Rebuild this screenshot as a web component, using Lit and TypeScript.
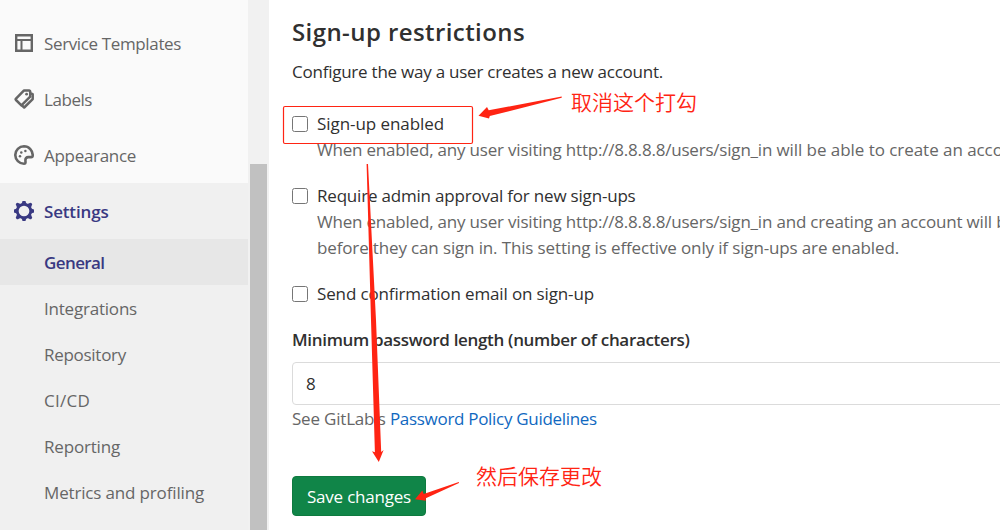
import { LitElement, html, css, svg, TemplateResult } from "lit";
import { customElement, property } from "lit/decorators.js";
import { classMap } from "lit/directives/class-map.js";
import { styleMap } from "lit/directives/style-map.js";

interface NavItem {
  label: string;
  tracking: number;
  icon?: TemplateResult;
  active?: boolean;
}

const track = (px: number) => styleMap({ letterSpacing: `${px}px` });

const templateIcon = svg`
  <path fill="none" stroke="currentColor" stroke-width="2.4" d="M2.2 2.2h15.6v15.6H2.2z"/>
  <path fill="none" stroke="currentColor" stroke-width="2" d="M2 7h16M7.500 7v11"/>`;

const labelsIcon = svg`
  <path fill="none" stroke="currentColor" stroke-width="2.500" stroke-linejoin="round"
    d="M9.800 1.600h5.400a1 1 0 0 1 1 1v5L7.400 16.300 2 11a1 1 0 0 1 0-1.400z"/>
  <path fill="none" stroke="currentColor" stroke-width="2.500" stroke-linejoin="round"
    d="M16.800 4.500l1.900.7v4.900L10.200 18.500 7.200 15.800"/>
  <circle cx="12.600" cy="5.200" r="1.400" fill="currentColor"/>`;

const appearanceIcon = svg`
  <path fill="none" stroke="currentColor" stroke-width="2.600" stroke-linejoin="round"
    d="M10 1.300a8.700 8.700 0 1 0 0 17.400c1.100 0 1.600-.5 1.500-1.700l-.1-2c0-1.900 1-2.900 2.800-2.900h2.900c1.100 0 1.600-.6 1.600-1.600A8.800 8.800 0 0 0 10 1.300z"/>
  <circle cx="11.400" cy="6" r="1.250" fill="currentColor"/>
  <circle cx="7.300" cy="7.400" r="1.250" fill="currentColor"/>
  <circle cx="6" cy="11.300" r="1.250" fill="currentColor"/>`;

const gearIcon = svg`
  <circle cx="10" cy="10" r="6.700" fill="none" stroke="currentColor" stroke-width="2.700"/>
  ${[0, 45, 90, 135, 180, 225, 270, 315].map(
    (a) => svg`<path fill="currentColor" transform="rotate(${a} 10 10)"
      d="M6.900 3.800l1.400-2.900a1.600 1.600 0 0 1 3.400 0l1.400 2.900z"/>`
  )}`;

const sections: NavItem[] = [
  { label: "Service Templates", tracking: -0.365, icon: templateIcon },
  { label: "Labels", tracking: -0.443, icon: labelsIcon },
  { label: "Appearance", tracking: -0.305, icon: appearanceIcon },
  { label: "Settings", tracking: -0.166, icon: gearIcon, active: true },
];

const pages: NavItem[] = [
  { label: "General", tracking: -0.595, active: true },
  { label: "Integrations", tracking: -0.209 },
  { label: "Repository", tracking: -0.281 },
  { label: "CI/CD", tracking: 0.253 },
  { label: "Reporting", tracking: -0.18 },
  { label: "Metrics and profiling", tracking: -0.158 },
];

@customElement("admin-sidebar")
class AdminSidebar extends LitElement {
  static styles = css`
    :host { display: flex; flex: none; width: 269px; height: 530px; overflow: hidden; color: #666; }
    .nav { width: 248px; background: #f0f0f0; }
    .sections { padding-top: 15px; background: #fafafa; }
    .section { display: flex; align-items: center; gap: 10px; height: 56px; padding-left: 14px; white-space: nowrap; }
    .label { padding-top: 1px; }
    .section.active { background: #f0f0f0; }
    .active { color: #393982; font-weight: 600; }
    .page { height: 46px; line-height: 47px; padding-left: 44px; white-space: nowrap; }
    .page.active { background: #e7e7e7; }
    .icon { width: 20px; height: 20px; flex: none; }
    .scroll { width: 17px; padding: 164px 2px 0; background: #f1f1f1; display: flex; }
    .thumb { flex: 1; background: #c1c1c1; }
  `;
  render() {
    return html`
      <nav class="nav">
        <div class="sections">
          ${sections.map(
            (s) => html`<div class=${classMap({ section: true, active: !!s.active })}>
              <svg class="icon" viewBox="0 0 20 20">${s.icon}</svg>
              <span class="label" style=${track(s.tracking)}>${s.label}</span>
            </div>`
          )}
        </div>
        ${pages.map(
          (p) => html`<div class=${classMap({ page: true, active: !!p.active })} style=${track(p.tracking)}>${p.label}</div>`
        )}
      </nav>
      <div class="scroll"><div class="thumb"></div></div>
    `;
  }
}

@customElement("check-row")
class CheckRow extends LitElement {
  @property() label = "";
  @property({ type: Number }) tracking = 0;
  static styles = css`
    :host { display: flex; gap: 9px; line-height: 26px; white-space: nowrap; }
    .box { width: 14px; height: 14px; margin-top: 5px; border: 1px solid #767676; border-radius: 2.5px; background: #fff; flex: none; }
    .help { color: #666; }
  `;
  render() {
    return html`
      <span class="box"></span>
      <div>
        <div style=${track(this.tracking)}>${this.label}</div>
        <div class="help"><slot></slot></div>
      </div>
    `;
  }
}

@customElement("app-root")
class AppRoot extends LitElement {
  static styles = css`
    :host {
      display: flex; position: relative; width: 1000px; height: 530px; overflow: hidden;
      background: #fff; color: #303030; font: 17px/26px "Open Sans", "Noto Sans", sans-serif;
    }
    .main { flex: none; width: 731px; box-sizing: border-box; padding: 16px 0 0 23px; white-space: nowrap; overflow: hidden; }
    h4 { margin: 0; font-size: 24px; line-height: 32px; font-weight: 600; letter-spacing: 0.416px; }
    .intro { margin-top: 11px; letter-spacing: -0.238px; }
    .checks { display: flex; flex-direction: column; gap: 20px; margin-top: 26px; }
    .help { letter-spacing: -0.2px; }
    .wide { letter-spacing: -0.05px; }
    .mid { letter-spacing: -0.19px; }
    .help-end { letter-spacing: -0.142px; }
    .field { margin-top: 20px; font-weight: 600; letter-spacing: -0.325px; }
    .input { width: 800px; height: 43px; box-sizing: border-box; margin-top: 9px; padding: 0 13px; border: 1px solid #dbdbdb; border-radius: 4px; line-height: 42px; }
    .hint { margin-top: 1px; color: #666; letter-spacing: -0.2px; }
    .link { color: #1068bf; letter-spacing: -0.301px; }
    .save { display: block; width: 134px; height: 40px; margin-top: 44px; padding: 1px 0 0; box-sizing: border-box; border: 1px solid #0e7a3f; border-radius: 4px; background: #108548; color: #fff; font: inherit; line-height: 37px; letter-spacing: -0.212px; }
    .marks { position: absolute; inset: 0; }
    .note { position: absolute; color: #ff2413; font: 350 21px/26px "Noto Sans CJK SC", sans-serif; white-space: nowrap; }
    .uncheck { left: 571px; top: 88px; }
    .then-save { left: 476px; top: 462px; }
  `;
  render() {
    return html`
      <admin-sidebar></admin-sidebar>
      <main class="main">
        <h4>Sign-up restrictions</h4>
        <div class="intro">Configure the way a user creates a new account.</div>
        <div class="checks">
          <check-row label="Sign-up enabled" tracking="-0.069">
            <div class="help">When enabled, any user visiting http://8.8.8.8/users/sign_in <span class="wide">will be able to create an acco</span></div>
          </check-row>
          <check-row label="Require admin approval for new sign-ups" tracking="-0.197">
            <div class="help">When enabled, any user visiting http://8.8.8.8/users/sign_in <span class="mid">and creating an account will be</span></div>
            <div class="help-end">before they can sign in. This setting is effective only if sign-ups are enabled.</div>
          </check-row>
          <check-row label="Send confirmation email on sign-up" tracking="-0.136"></check-row>
        </div>
        <div class="field">Minimum password length (number of characters)</div>
        <div class="input">8</div>
        <div class="hint">See GitLab's <span class="link">Password Policy Guidelines</span></div>
        <button class="save">Save changes</button>
      </main>
      <svg class="marks" width="1000" height="530" viewBox="0 0 1000 530">
        <rect x="283.500" y="106.500" width="189" height="37" rx="1.500" fill="none" stroke="#ff2413" stroke-width="1.200"/>
        <g fill="#ff2413">
          <path d="M561.700 96.500 488.700 110.300 487 107 478.500 115.800 489 118.500 489.800 116 561.700 97.800z"/>
          <path d="M366.600 164h1.400L376 320 381.200 452 383.600 450 378.800 461.900 372 451.200 374.900 452.300 371 320z"/>
          <path d="M458.800 481.900 423.700 494 422.300 490.400 415 499.300 425.800 500.800 425.800 498.300 459 483.100z"/>
        </g>
      </svg>
      <div class="note uncheck">取消这个打勾</div>
      <div class="note then-save">然后保存更改</div>
    `;
  }
}
